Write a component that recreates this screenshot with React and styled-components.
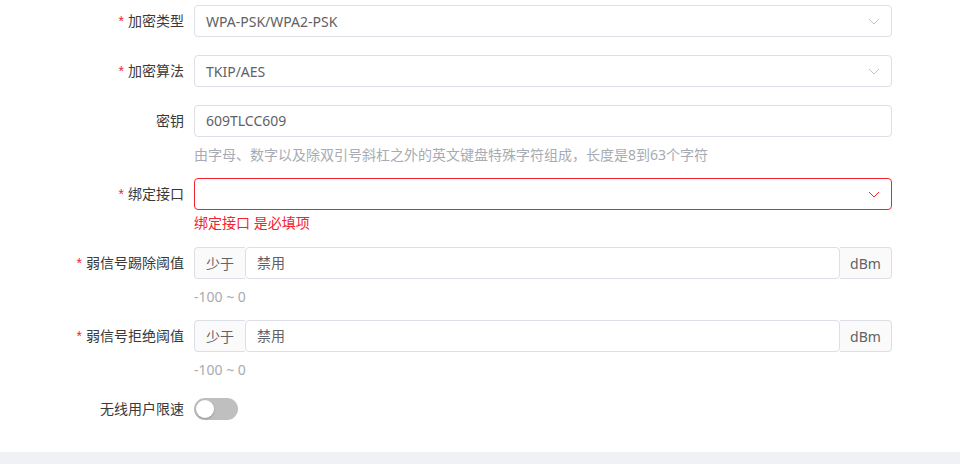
import React from 'react'
import styled, { createGlobalStyle } from 'styled-components'

const GlobalStyle = createGlobalStyle`
  html, body {
    margin: 0;
    padding: 0;
    background: #ffffff;
  }
  body {
    font-family: "Noto Sans", "Noto Sans CJK SC", sans-serif;
    font-size: 14px;
  }
`

const Chevron = ({ error }) => (
  <svg width="12" height="7" viewBox="0 0 12 7" fill="none">
    <path d="M1 1l5 5 5-5" stroke={error ? '#f5222d' : '#c0c4cc'} strokeWidth="1" />
  </svg>
)

function App() {
  return (
    <>
      <GlobalStyle />
      <Page>
        <Form>
          <Item>
            <Label required>加密类型</Label>
            <Control>
              <Select>
                <span>WPA-PSK/WPA2-PSK</span>
                <Chevron />
              </Select>
            </Control>
          </Item>

          <Item>
            <Label required>加密算法</Label>
            <Control>
              <Select>
                <span>TKIP/AES</span>
                <Chevron />
              </Select>
            </Control>
          </Item>

          <Item tight>
            <Label>密钥</Label>
            <Control>
              <Input>609TLCC609</Input>
              <Help>由字母、数字以及除双引号斜杠之外的英文键盘特殊字符组成，长度是8到63个字符</Help>
            </Control>
          </Item>

          <Item tight>
            <Label required>绑定接口</Label>
            <Control>
              <Select error>
                <span></span>
                <Chevron error />
              </Select>
              <ErrorText>绑定接口 是必填项</ErrorText>
            </Control>
          </Item>

          <Item tight>
            <Label required>弱信号踢除阈值</Label>
            <Control>
              <Group>
                <Addon side="left">少于</Addon>
                <GroupInput>禁用</GroupInput>
                <Addon side="right">dBm</Addon>
              </Group>
              <Help>-100 ~ 0</Help>
            </Control>
          </Item>

          <Item tight>
            <Label required>弱信号拒绝阈值</Label>
            <Control>
              <Group>
                <Addon side="left">少于</Addon>
                <GroupInput>禁用</GroupInput>
                <Addon side="right">dBm</Addon>
              </Group>
              <Help>-100 ~ 0</Help>
            </Control>
          </Item>

          <Item>
            <Label>无线用户限速</Label>
            <Control>
              <SwitchRow>
                <Switch>
                  <Knob />
                </Switch>
              </SwitchRow>
            </Control>
          </Item>
        </Form>
        <Footer />
      </Page>
    </>
  )
}

export default App

const Page = styled.div`
  width: 960px;
  height: 464px;
  display: flex;
  flex-direction: column;
  overflow: hidden;
`

const Form = styled.div`
  flex: 1;
  padding: 5px 68px 0 0;
  display: flex;
  flex-direction: column;
`

const Item = styled.div`
  display: flex;
  align-items: flex-start;
  margin-bottom: ${p => (p.tight ? '11px' : '18px')};
`

const Label = styled.div`
  flex: none;
  box-sizing: content-box;
  width: 184px;
  height: 32px;
  line-height: 32px;
  text-align: right;
  padding-right: 10px;
  color: #3a3a3a;
  &::before {
    content: ${p => (p.required ? '"*"' : 'none')};
    color: #f5222d;
    margin-right: 4px;
    font-family: "Liberation Sans", sans-serif;
  }
`

const Control = styled.div`
  flex: 1;
  display: flex;
  flex-direction: column;
`

const Select = styled.div`
  height: 32px;
  box-sizing: border-box;
  border: 1px solid ${p => (p.error ? '#f5222d' : '#dcdfe6')};
  border-radius: 4px;
  padding: 0 11px 0 11px;
  display: flex;
  align-items: center;
  justify-content: space-between;
  color: #606266;
`

const Input = styled.div`
  height: 32px;
  box-sizing: border-box;
  border: 1px solid #dcdfe6;
  border-radius: 4px;
  padding: 0 11px;
  line-height: 30px;
  color: #606266;
`

const Help = styled.div`
  margin-top: 6px;
  line-height: 24px;
  font-size: 14px;
  color: #a8abb2;
`

const ErrorText = styled.div`
  margin-top: 1px;
  line-height: 24px;
  color: #f5222d;
  margin-bottom: 1px;
`

const Group = styled.div`
  display: flex;
  height: 32px;
`

const Addon = styled.div`
  flex: none;
  width: ${p => (p.side === 'left' ? '51px' : '52px')};
  box-sizing: border-box;
  background: #fafafa;
  border: 1px solid #dcdfe6;
  border-radius: ${p => (p.side === 'left' ? '4px 0 0 4px' : '0 4px 4px 0')};
  ${p => (p.side === 'left' ? 'border-right: none;' : 'border-left: none;')}
  display: flex;
  align-items: center;
  justify-content: center;
  color: #606266;
`

const GroupInput = styled.div`
  flex: 1;
  box-sizing: border-box;
  border: 1px solid #dcdfe6;
  border-radius: 4px;
  padding: 0 11px;
  line-height: 30px;
  color: #606266;
`

const SwitchRow = styled.div`
  height: 32px;
  display: flex;
  align-items: center;
`

const Switch = styled.div`
  position: relative;
  width: 44px;
  height: 22px;
  border-radius: 11px;
  background: #bfbfbf;
`

const Knob = styled.span`
  position: absolute;
  top: 2px;
  left: 2px;
  width: 18px;
  height: 18px;
  border-radius: 50%;
  background: #ffffff;
  box-shadow: 0 1px 2px rgba(0, 35, 11, 0.25);
`

const Footer = styled.div`
  height: 12px;
  background: #f0f1f5;
`
